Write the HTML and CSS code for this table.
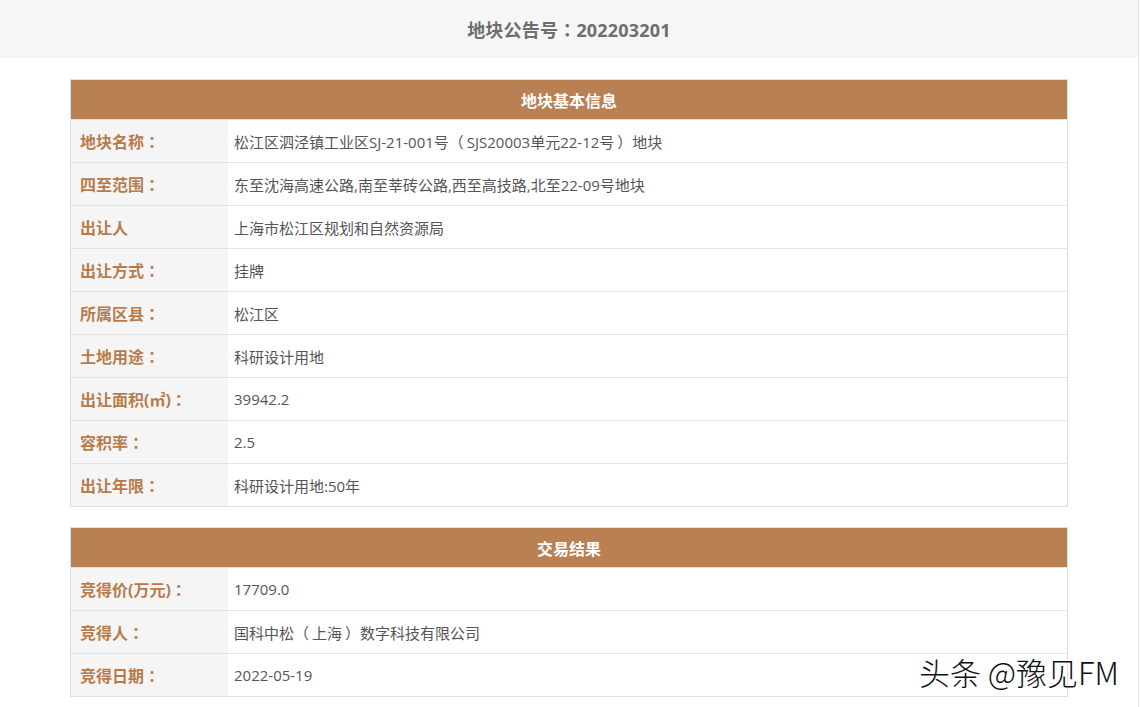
FILE: index.html
```html
<!DOCTYPE html>
<html lang="zh-CN">
<head>
<meta charset="utf-8">
<title>地块公告号：202203201</title>
<link rel="stylesheet" href="styles.css">
</head>
<body>
<div class="page">
  <header class="top">
    <h1 class="title">地块公告号<span class="c" lang="zh-TW">：</span>202203201</h1>
  </header>
  <main class="content">
    <table class="info">
      <thead><tr><th colspan="2">地块基本信息</th></tr></thead>
      <tbody>
        <tr><td class="k">地块名称<span class="c" lang="zh-TW">：</span></td><td class="v">松江区泗泾镇工业区SJ-21-001号<span class="po">（</span>SJS20003单元22-12号<span class="pc">）</span>地块</td></tr>
        <tr><td class="k">四至范围<span class="c" lang="zh-TW">：</span></td><td class="v">东至沈海高速公路,南至莘砖公路,西至高技路,北至22-09号地块</td></tr>
        <tr><td class="k">出让人</td><td class="v">上海市松江区规划和自然资源局</td></tr>
        <tr><td class="k">出让方式<span class="c" lang="zh-TW">：</span></td><td class="v">挂牌</td></tr>
        <tr><td class="k">所属区县<span class="c" lang="zh-TW">：</span></td><td class="v">松江区</td></tr>
        <tr><td class="k">土地用途<span class="c" lang="zh-TW">：</span></td><td class="v">科研设计用地</td></tr>
        <tr><td class="k">出让面积(㎡)<span class="c" lang="zh-TW">：</span></td><td class="v">39942.2</td></tr>
        <tr><td class="k">容积率<span class="c" lang="zh-TW">：</span></td><td class="v">2.5</td></tr>
        <tr><td class="k">出让年限<span class="c" lang="zh-TW">：</span></td><td class="v">科研设计用地:50年</td></tr>
      </tbody>
    </table>
    <table class="info">
      <thead><tr><th colspan="2">交易结果</th></tr></thead>
      <tbody>
        <tr><td class="k">竞得价(万元)<span class="c" lang="zh-TW">：</span></td><td class="v">17709.0</td></tr>
        <tr><td class="k">竞得人<span class="c" lang="zh-TW">：</span></td><td class="v">国科中松<span class="po">（</span>上海<span class="pc">）</span>数字科技有限公司</td></tr>
        <tr><td class="k">竞得日期<span class="c" lang="zh-TW">：</span></td><td class="v">2022-05-19</td></tr>
      </tbody>
    </table>
  </main>
  <div class="watermark">头条 @豫见FM</div>
</div>
</body>
</html>
```
FILE: styles.css
```css
html, body {
  margin: 0;
  padding: 0;
  background: #fff;
}
body {
  font-family: "Open Sans", "Noto Sans CJK SC", sans-serif;
  color: #555;
}
.page {
  position: relative;
  width: 1138px;
  height: 707px;
  border-right: 1px solid #e4e4e4;
  overflow: hidden;
}
.c {
  font-family: "Noto Sans CJK TC", sans-serif;
}
.po {
  padding-right: 3px;
}
.pc {
  padding-left: 3px;
}
.top {
  height: 58px;
  background: #f6f6f6;
  display: flex;
  align-items: center;
  justify-content: center;
}
.title {
  margin: 0;
  font-size: 18px;
  font-weight: bold;
  color: #6e6e6e;
  letter-spacing: 0.2px;
}
.content {
  padding: 21px 0 0 70px;
  display: flex;
  flex-direction: column;
  gap: 20px;
}
.info {
  width: 998px;
  border-collapse: collapse;
  border: 1px solid #dedede;
}
.info th {
  height: 39px;
  padding: 0;
  background: #b98052;
  color: #fff;
  font-size: 16px;
  font-weight: bold;
  text-align: center;
  font-family: "Noto Sans CJK SC", sans-serif;
}
.info td {
  height: 42px;
  padding: 0;
  border-top: 1px solid #e3e3e3;
  vertical-align: middle;
}
.info .k {
  width: 148px;
  padding-left: 9px;
  background: #f5f5f5;
  color: #b87b4b;
  font-size: 16px;
  font-weight: bold;
}
.info .v {
  padding-left: 6px;
  font-size: 15px;
  color: #555;
}
.watermark {
  position: absolute;
  left: 919px;
  top: 649px;
  font-size: 31px;
  color: #111;
  font-family: "Noto Sans CJK SC", sans-serif;
  font-weight: 300;
  text-shadow: 1px 1px 0 #fff, -1px -1px 0 #fff, 1px -1px 0 #fff, -1px 1px 0 #fff;
}
```
